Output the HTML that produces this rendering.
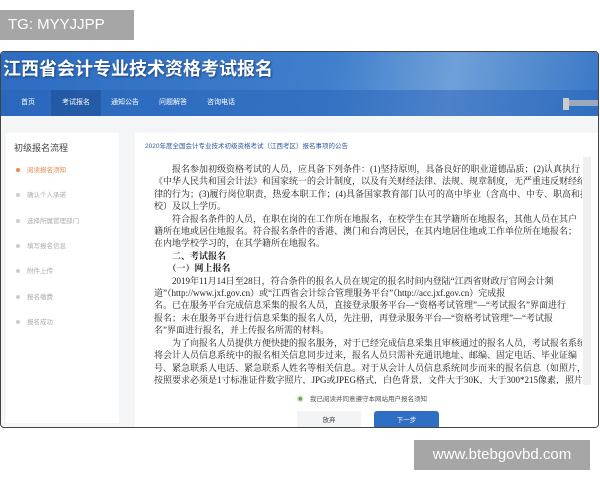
<!DOCTYPE html>
<html><head><meta charset="utf-8"><style>
*{margin:0;padding:0;box-sizing:border-box}
body{width:600px;height:480px;background:#fff;position:relative;overflow:hidden;font-family:"Liberation Sans","Noto Sans CJK SC",sans-serif}
.tg{position:absolute;left:0;top:10px;width:134px;height:30px;background:#a6a6a6;color:#fff;font-size:15px;line-height:30px;padding-left:8px}
.wm{position:absolute;left:414px;top:440px;width:176px;height:30px;background:#a6a6a6;color:#fff;font-size:15px;line-height:30px;text-align:center}
.frame{position:absolute;left:0;top:51px;width:599px;height:377px;border:1px solid #444;border-radius:4px;overflow:hidden;background:#f4f5f7}
.hd{position:absolute;left:0;top:0;width:100%;height:64px;background:linear-gradient(100deg,#2d6cc0 0%,#3f7fcc 55%,#6fa0d8 75%,#3a78c6 100%)}
.title{position:absolute;left:2px;top:3px;color:#fff;font-size:18px;font-weight:bold;text-shadow:1px 1px 2px #1a3f7a;font-family:"Noto Sans CJK SC",sans-serif}
.nav{position:absolute;left:0;top:38px;height:26px;width:100%;background:rgba(40,100,185,.5)}
.nav span{position:absolute;top:0;height:26px;line-height:26px;color:#fff;font-size:7px;text-align:center}
.lp{position:absolute;left:5px;top:81px;width:113px;height:290px;background:#fff}
.lp .h{position:absolute;left:8px;top:8px;font-size:9px;color:#444}
.st{position:absolute;left:10px;font-size:6.5px;color:#aaa}
.st i{display:inline-block;width:4px;height:4px;border-radius:50%;background:#ccc;margin-right:7px;vertical-align:middle}
.rp{position:absolute;left:134px;top:81px;width:465px;height:300px;background:#fff}
.ct{position:absolute;left:10px;top:7px;font-size:6.5px;color:#2a5aa8}
.tx{position:absolute;left:19px;top:30px;width:428px;font-family:"Liberation Serif","Noto Serif CJK SC",serif;font-size:9px;color:#222;line-height:12.4px;white-space:nowrap;height:221px;overflow:hidden}
.sb{position:absolute;left:448px;top:24px;width:8px;height:228px;background:#f0f0f0}
.ck{position:absolute;left:296px;font-size:6.5px;color:#555}
.b1{position:absolute;left:296px;width:64px;height:20px;background:#f3f4f6;font-size:6.5px;text-align:center;line-height:20px;color:#444}
.b2{position:absolute;left:373px;width:65px;height:20px;background:#2e6fc4;border-radius:3px 3px 0 0;font-size:6.5px;text-align:center;line-height:20px;color:#fff}
</style></head><body>
<div class="tg">TG: MYYJJPP</div>
<div class="frame">
<div class="hd"><div class="title">江西省会计专业技术资格考试报名</div>
<div class="nav"><span style="left:12px;width:30px">首页</span><span style="left:50px;width:50px;background:rgba(30,80,150,.6)">考试报名</span><span style="left:104px;width:40px">通知公告</span><span style="left:150px;width:44px">问题解答</span><span style="left:198px;width:44px">咨询电话</span>
<span style="left:562px;top:8px;width:6px;height:12px;background:#ccc"></span><span style="left:568px;top:10px;width:30px;height:6px;background:#9ab"></span></div></div>
<div class="lp"><div class="h">初级报名流程</div>
<div class="st" style="top:31px;color:#e88a50"><i style="background:#e88a50"></i>阅读报名须知</div>
<div class="st" style="top:56px"><i></i>确认个人承诺</div>
<div class="st" style="top:82px"><i></i>选择所属管理部门</div>
<div class="st" style="top:107px"><i></i>填写报名信息</div>
<div class="st" style="top:132px"><i></i>附件上传</div>
<div class="st" style="top:158px"><i></i>报名缴费</div>
<div class="st" style="top:183px"><i></i>报名成功</div></div>
<div class="rp"><div class="ct">2020年度全国会计专业技术初级资格考试（江西考区）报名事项的公告</div>
<div class="tx">　　报名参加初级资格考试的人员，应具备下列条件：(1)坚持原则，具备良好的职业道德品质；(2)认真执行<br>《中华人民共和国会计法》和国家统一的会计制度，以及有关财经法律、法规、规章制度，无严重违反财经纪<br>律的行为；(3)履行岗位职责，热爱本职工作；(4)具备国家教育部门认可的高中毕业（含高中、中专、职高和技<br>校）及以上学历。<br>　　符合报名条件的人员，在职在岗的在工作所在地报名，在校学生在其学籍所在地报名，其他人员在其户<br>籍所在地或居住地报名。符合报名条件的香港、澳门和台湾居民，在其内地居住地或工作单位所在地报名；<br>在内地学校学习的，在其学籍所在地报名。<br>　　<b>二、考试报名</b><br>　　<b>（一）网上报名</b><br>　　2019年11月14日至28日，符合条件的报名人员在规定的报名时间内登陆“江西省财政厅官网会计频<br>道”（http://www.jxf.gov.cn）或“江西省会计综合管理服务平台”（http://acc.jxf.gov.cn）完成报<br>名。已在服务平台完成信息采集的报名人员，直接登录服务平台—“资格考试管理”—“考试报名”界面进行<br>报名；未在服务平台进行信息采集的报名人员，先注册，再登录服务平台—“资格考试管理”—“考试报<br>名”界面进行报名，并上传报名所需的材料。<br>　　为了向报名人员提供方便快捷的报名服务，对于已经完成信息采集且审核通过的报名人员，考试报名系统<br>将会计人员信息系统中的报名相关信息同步过来，报名人员只需补充通讯地址、邮编、固定电话、毕业证编<br>号、紧急联系人电话、紧急联系人姓名等相关信息。对于从会计人员信息系统同步而来的报名信息（如照片，<br>按照要求必须是1寸标准证件数字照片，JPG或JPEG格式，白色背景，文件大于30K，大于300*215像素，照片<br>清晰），不符合报名要求的，报名人员应根据系统给出的提示，自行上传符合要求的信息。</div>
<div class="sb"></div></div>
<div class="ck" style="top:341px"><span style="color:#6a4">◉</span>　我已阅读并同意遵守本网站用户报名须知</div>
<div class="b1" style="top:359px">放弃</div>
<div class="b2" style="top:359px">下一步</div>
</div>
<div class="wm">www.btebgovbd.com</div>
</body></html>
